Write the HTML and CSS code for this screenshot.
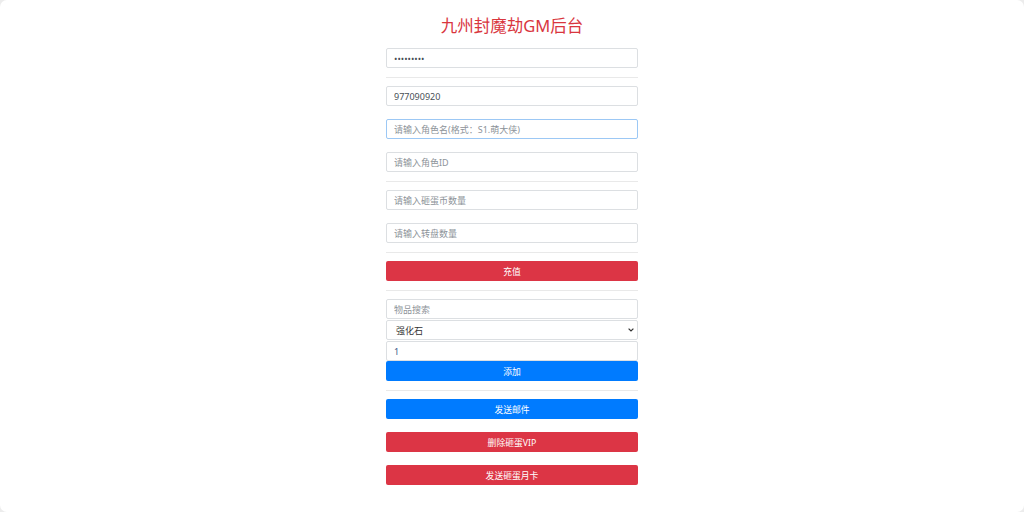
FILE: index.html
```html
<!DOCTYPE html>
<html lang="zh-CN">
<head>
<meta charset="utf-8">
<title>九州封魔劫GM后台</title>
<link rel="stylesheet" href="styles.css">
</head>
<body>
<main class="page">
  <h1 class="title">九州封魔劫GM后台</h1>

  <section class="stack">
    <input class="field" type="password" value="123456789">
  </section>
  <hr class="rule">

  <section class="stack">
    <input class="field" type="text" value="977090920">
    <input class="field field-focus" type="text" placeholder="请输入角色名(格式：S1.萌大侠)">
    <input class="field" type="text" placeholder="请输入角色ID">
  </section>
  <hr class="rule">

  <section class="stack">
    <input class="field" type="text" placeholder="请输入砸蛋币数量">
    <input class="field" type="text" placeholder="请输入转盘数量">
  </section>
  <hr class="rule">

  <button class="btn btn-red" type="button">充值</button>
  <hr class="rule">

  <section class="group">
    <input class="field" type="text" placeholder="物品搜索">
    <div class="select-wrap">
      <select class="field field-select">
        <option>强化石</option>
      </select>
      <svg class="select-arrow" width="6" height="4" viewBox="0 0 6 4" aria-hidden="true">
        <path d="M0.6 0.6 L3 3 L5.4 0.6" fill="none" stroke="#333" stroke-width="1.2"/>
      </svg>
    </div>
    <input class="field field-qty" type="text" value="1">
    <button class="btn btn-blue btn-join" type="button">添加</button>
  </section>
  <hr class="rule">

  <section class="stack">
    <button class="btn btn-blue" type="button">发送邮件</button>
    <button class="btn btn-red" type="button">删除砸蛋VIP</button>
    <button class="btn btn-red" type="button">发送砸蛋月卡</button>
  </section>
</main>
</body>
</html>
```

FILE: styles.css
```css
html {
  background: #ececec;
}

body {
  margin: 0;
  min-height: 100vh;
  background: #ffffff;
  border-radius: 7px;
  font-family: "Noto Sans", "Noto Sans CJK SC", sans-serif;
}

.page {
  width: 252px;
  margin: 0 auto;
  padding-top: 14px;
}

.title {
  margin: 0 0 10px;
  font-size: 16.5px;
  line-height: 24px;
  font-weight: normal;
  color: #d9363e;
  text-align: center;
}

.stack {
  display: flex;
  flex-direction: column;
  gap: 13px;
}

.group {
  display: flex;
  flex-direction: column;
  gap: 1px;
}

.field {
  display: block;
  width: 100%;
  height: 20px;
  box-sizing: border-box;
  margin: 0;
  padding: 0 7px;
  border: 1px solid #dcdfe2;
  border-radius: 2px;
  background: #ffffff;
  font-family: "Noto Sans", "Noto Sans CJK SC", sans-serif;
  font-size: 9px;
  color: #495057;
  outline: none;
}

.field::placeholder {
  color: #8d9399;
}

.field-focus {
  border-color: #9cc8f5;
}

.select-wrap {
  position: relative;
}

.field-select {
  appearance: none;
  -webkit-appearance: none;
  padding: 0 14px 0 9px;
  color: #333;
}

.select-arrow {
  position: absolute;
  right: 4px;
  top: 8px;
  pointer-events: none;
}

.field-qty {
  color: #3a5a8a;
}

.btn {
  display: block;
  width: 100%;
  height: 20px;
  margin: 0;
  padding: 0;
  border: none;
  border-radius: 2px;
  font-family: "Noto Sans", "Noto Sans CJK SC", sans-serif;
  font-size: 8.8px;
  color: #ffffff;
  text-align: center;
}

.btn-red {
  background: #dc3545;
}

.btn-blue {
  background: #007bff;
}

.btn-join {
  margin-top: -1px;
}

.rule {
  margin: 8.5px 0;
  height: 0;
  border: 0;
  border-top: 1px solid #e9e9e9;
}
```
